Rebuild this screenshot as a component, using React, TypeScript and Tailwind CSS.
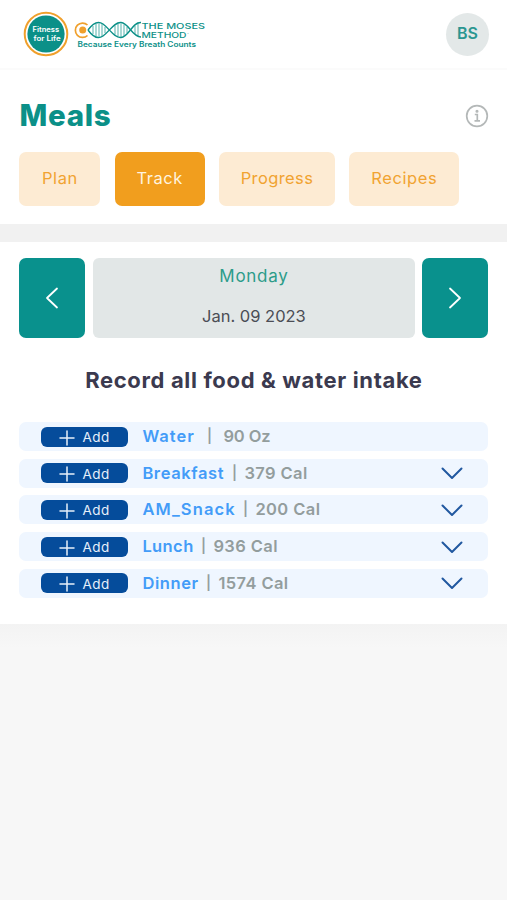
import React from "react";
import clsx from "clsx";

interface Tab {
  label: string;
  box: string;
  active?: boolean;
}

interface Meal {
  name: string;
  amount: string;
  nameClass: string;
  gap: string;
  amountClass: string;
  expandable: boolean;
}

const tabs: Tab[] = [
  { label: "Plan", box: "w-[81px] tracking-[0.6px]" },
  { label: "Track", box: "w-[90px] tracking-[0.5px]", active: true },
  { label: "Progress", box: "w-[116px] tracking-[0.4px]" },
  { label: "Recipes", box: "w-[110px] tracking-[0.6px]" },
];

const meals: Meal[] = [
  { name: "Water", amount: "90 Oz", nameClass: "w-[53px] tracking-[1px]", gap: "w-[28px]", amountClass: "tracking-[-0.1px]", expandable: false },
  { name: "Breakfast", amount: "379 Cal", nameClass: "w-[82px] tracking-[0.6px]", gap: "w-[20px]", amountClass: "tracking-[0.4px]", expandable: true },
  { name: "AM_Snack", amount: "200 Cal", nameClass: "w-[93px] tracking-[1.1px]", gap: "w-[20px]", amountClass: "tracking-[0.4px]", expandable: true },
  { name: "Lunch", amount: "936 Cal", nameClass: "w-[51px] tracking-[0.4px]", gap: "w-[20px]", amountClass: "tracking-[0.4px]", expandable: true },
  { name: "Dinner", amount: "1574 Cal", nameClass: "w-[56px] tracking-[0.6px]", gap: "w-[20px]", amountClass: "tracking-[0.4px]", expandable: true },
];

const Logo = () => (
  <svg width="190" height="48" viewBox="20 11 190 48" fill="none" fontFamily="Inter, sans-serif">
    <circle cx="46" cy="35" r="21.3" stroke="#f0a02c" strokeWidth="2" />
    <circle cx="46" cy="35" r="18.6" fill="#0b9088" />
    <text x="32.6" y="33" fontSize="7.2" fontWeight="600" fill="#fff" textLength="26.5" lengthAdjust="spacingAndGlyphs">Fitness</text>
    <text x="33.6" y="41.8" fontSize="7.2" fontWeight="600" fill="#fff" textLength="27" lengthAdjust="spacingAndGlyphs">for Life</text>

    {/* breath dot and helix */}
    <path d="M87.5 26A7.2 7.2 0 1 0 87.5 36.5" stroke="#f0a02c" strokeWidth="1.7" />
    <circle cx="82.7" cy="31" r="3.5" fill="#f0a02c" />
    <g stroke="#0b9088" strokeWidth="1.4">
      <path d="M88 31C93 24 98 21.5 103 25C110 30 114 39 121 38.5C129 38 132 23 141 23.5" />
      <path d="M88 31C93 38 98 40.5 103 37C110 32 114 23 121 23.5C129 24 132 38 141 38" />
      <path
        d="M93 27v8M96 25v12M99 24.5v13M102 25v12M105 28v6M115 26.5v9M118 25v12.5M121 24.5v13.5M124 25.5v11.5M127 28v6M135 27v8M138 24.5v13"
        strokeWidth="0.7"
      />
    </g>

    <g fill="#0b9088">
      <text x="141.5" y="29.8" fontSize="7.9" fontWeight="500" textLength="63.5" lengthAdjust="spacingAndGlyphs">THE MOSES</text>
      <text x="141.5" y="39.4" fontSize="7.9" fontWeight="500" textLength="45" lengthAdjust="spacingAndGlyphs">METHOD</text>
      <text x="187" y="35.5" fontSize="2.5">™</text>
      <text x="77.5" y="48" fontSize="7.2" fontWeight="600" textLength="118.5" lengthAdjust="spacingAndGlyphs">Because Every Breath Counts</text>
    </g>
  </svg>
);

const Chevron = ({ d, className }: { d: string; className: string }) => (
  <svg width="24" height="24" viewBox="0 0 24 24" fill="none" stroke="currentColor" strokeLinecap="round" strokeLinejoin="round" className={className}>
    <path d={d} />
  </svg>
);

const MealRow = ({ meal }: { meal: Meal }) => (
  <div className="flex h-[29px] items-center rounded-[7px] bg-[#eff6ff] pl-[22px] pr-[24px]">
    <button className="flex h-5 w-[87px] shrink-0 items-center rounded-md bg-[#054c9b] pl-[18px] text-[13.5px] tracking-[0.5px] text-[#e6effa]">
      <svg width="16" height="16" viewBox="0 0 16 16" stroke="currentColor" strokeWidth="1.5" strokeLinecap="round" className="mr-[7px] mt-0.5">
        <path d="M8 1v14M1 8h14" />
      </svg>
      <span className="pt-px">Add</span>
    </button>
    <div className="ml-3.5 flex items-center whitespace-nowrap pb-px text-[16.5px] font-semibold leading-5 text-[#939d9d]">
      <span className={clsx("text-[#439cf8]", meal.nameClass)}>{meal.name}</span>
      <span className={clsx("text-center text-[14px]", meal.gap)}>|</span>
      <span className={meal.amountClass}>{meal.amount}</span>
    </div>
    {meal.expandable && <Chevron d="M2.5 7.5L12 17L21.5 7.5" className="ml-auto stroke-2 text-[#2158a0]" />}
  </div>
);

const App = () => {
  return (
    <div className="min-h-screen bg-[#f7f7f7] font-['Inter',sans-serif]">
      <header className="flex h-[68px] items-center justify-between bg-white pl-5 pr-[18px]">
        <Logo />
        <div className="flex size-[43px] items-center justify-center rounded-full bg-[#e3e8e8] pb-0.5 text-[16px] font-semibold text-[#2b9691]">
          BS
        </div>
      </header>

      <section className="h-[156px] border-t-2 border-[#fbfbfb] bg-white px-[19.4px] pt-[25px]">
        <div className="flex h-10 items-center justify-between">
          <h1 className="text-[29.5px] font-extrabold tracking-[0.7px] text-[#0b9088]">Meals</h1>
          <svg width="24" height="24" viewBox="0 0 24 24" fill="none" stroke="#b4b8b8" strokeWidth="1.7" className="-mr-px mt-px">
            <circle cx="12" cy="12" r="10.3" />
            <path d="M9.8 10.5h2.5v6M9.5 16.8h5.5" />
            <circle cx="12" cy="7.2" r="0.7" fill="#b4b8b8" />
          </svg>
        </div>
        <nav className="mt-[17px] flex gap-[14.3px]">
          {tabs.map((tab) => (
            <button
              key={tab.label}
              className={clsx(
                "h-[54px] rounded-[7px] pb-0.5 text-[16.5px]",
                tab.box,
                tab.active ? "bg-[#f19e1e] text-[#fff3df]" : "bg-[#fdebd3] text-[#f1a331]"
              )}
            >
              {tab.label}
            </button>
          ))}
        </nav>
      </section>

      <div className="h-[18px] bg-[#f1f1f1]" />

      <main className="h-[382px] bg-white pl-[19.4px] pr-[18.6px] pt-[15.5px]">
        <div className="flex h-[80.5px] justify-between">
          <button className="flex w-[66px] items-center justify-center rounded-[7px] bg-[#09918d] text-white">
            <Chevron d="M17 2.5L7 12L17 21.5" className="stroke-[1.8]" />
          </button>
          <div className="flex w-[322px] flex-col items-center rounded-md bg-[#e2e7e7] text-[16.5px] leading-6">
            <span className="mt-[6px] text-[17px] tracking-[0.7px] text-[#2c9c8a]">Monday</span>
            <span className="mt-4 text-[#4b4d55]">Jan. 09 2023</span>
          </div>
          <button className="flex w-[66px] items-center justify-center rounded-[7px] bg-[#09918d] text-white">
            <Chevron d="M7 2.5L17 12L7 21.5" className="stroke-[1.8]" />
          </button>
        </div>

        <h2 className="mt-7 whitespace-nowrap text-center text-[22px] font-bold leading-7 tracking-[0.65px] text-[#3b3a4f]">
          Record all food &amp; water intake
        </h2>

        <div className="mt-7 flex flex-col gap-[7.7px]">
          {meals.map((meal) => (
            <MealRow key={meal.name} meal={meal} />
          ))}
        </div>
      </main>
      <div className="h-6 bg-linear-to-b from-[#f3f3f3] to-[#f7f7f7]" />
    </div>
  );
};

export default App;
